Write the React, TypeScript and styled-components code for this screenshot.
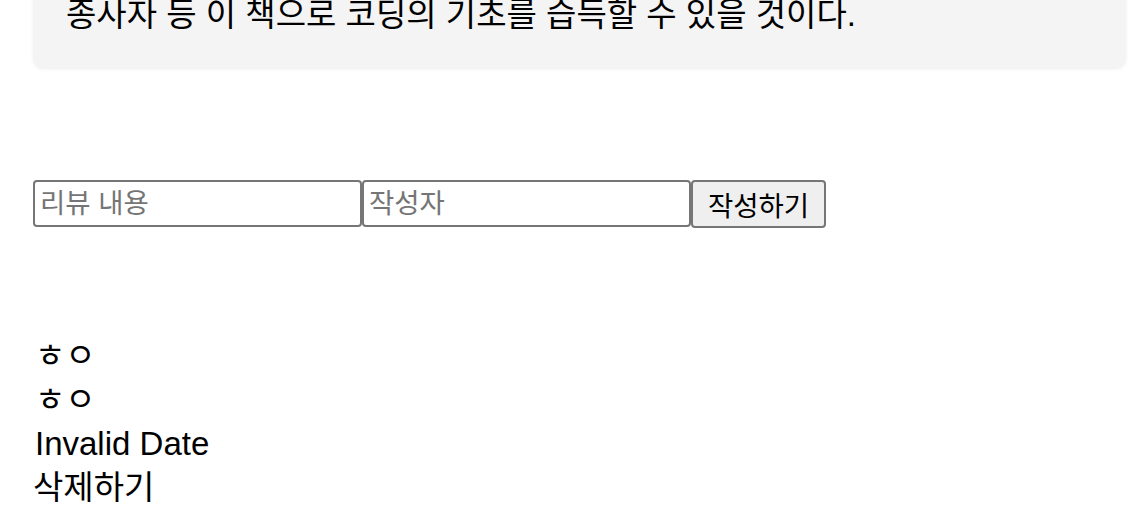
import styled, { createGlobalStyle } from "styled-components";
import { useState } from "react";

const GlobalStyle = createGlobalStyle`
  body {
    margin: 0;
    background: #ffffff;
    color: #000000;
    font-family: "Liberation Sans", "Noto Sans CJK KR", sans-serif;
  }
`;

const Page = styled.div`
  margin-top: -39px;
  padding: 0 22px 0 33px;
`;

const Description = styled.div`
  background: #f4f4f4;
  border-radius: 10px;
  box-shadow: 0 0 4px rgba(0, 0, 0, 0.06);
  padding: 32px 33px;
  font-size: 33px;
  line-height: 44px;
`;

const ReviewForm = styled.form`
  display: flex;
  align-items: flex-start;
  margin-top: 111px;
`;

const TextInput = styled.input`
  box-sizing: border-box;
  width: 329px;
  height: 47px;
  padding: 0 5px;
  border: 2px solid #767676;
  border-radius: 4px;
  background: #ffffff;
  font-family: "Liberation Sans", "Noto Sans CJK KR", sans-serif;
  font-size: 27.5px;
  color: #000000;
  &::placeholder {
    color: #757575;
  }
`;

const SubmitButton = styled.button`
  box-sizing: border-box;
  width: 135px;
  height: 48px;
  padding: 0;
  border: 2px solid #767676;
  border-radius: 4px;
  background: #efefef;
  font-family: "Liberation Sans", "Noto Sans CJK KR", sans-serif;
  font-size: 27.5px;
  color: #000000;
`;

const ReviewList = styled.div`
  margin-top: 106px;
`;

const ReviewLine = styled.div<{ $indent?: number }>`
  font-size: 33px;
  line-height: 44px;
  padding-left: ${(props) => props.$indent ?? 0}px;
`;

const DeleteText = styled.div`
  font-size: 33px;
  line-height: 44px;
  cursor: pointer;
`;

interface Review {
  id: number;
  content: string;
  writer: string;
  createdAt: string;
}

export default function App() {
  const [reviews, setReviews] = useState<Review[]>([
    { id: 1, content: "ㅎㅇ", writer: "ㅎㅇ", createdAt: "Invalid Date" },
  ]);

  return (
    <>
      <GlobalStyle />
      <Page>
        <Description>종사자 등 이 책으로 코딩의 기초를 습득할 수 있을 것이다.</Description>
        <ReviewForm onSubmit={(e) => e.preventDefault()}>
          <TextInput placeholder="리뷰 내용" />
          <TextInput placeholder="작성자" />
          <SubmitButton type="submit">작성하기</SubmitButton>
        </ReviewForm>
        <ReviewList>
          {reviews.map((review) => (
            <div key={review.id}>
              <ReviewLine $indent={2}>{review.content}</ReviewLine>
              <ReviewLine $indent={2}>{review.writer}</ReviewLine>
              <ReviewLine $indent={2}>{review.createdAt}</ReviewLine>
              <DeleteText onClick={() => setReviews(reviews.filter((r) => r.id !== review.id))}>
                삭제하기
              </DeleteText>
            </div>
          ))}
        </ReviewList>
      </Page>
    </>
  );
}
